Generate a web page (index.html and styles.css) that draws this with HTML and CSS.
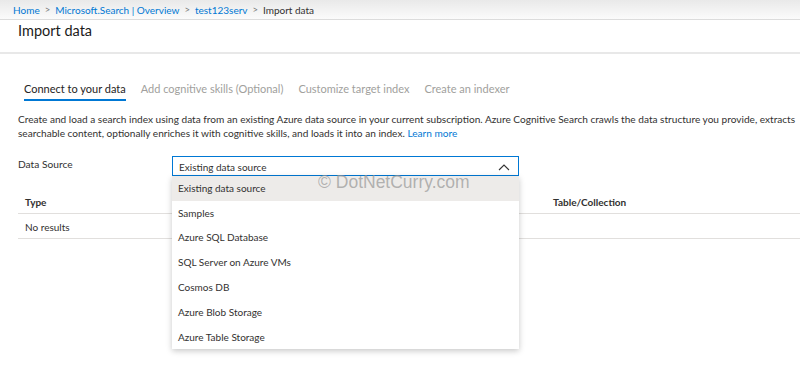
FILE: index.html
```html
<!DOCTYPE html>
<html>
<head>
<meta charset="utf-8">
<link rel="stylesheet" href="styles.css">
</head>
<body>
<div class="topbar">
  <nav class="crumbs">
    <a class="crumb">Home</a><span class="sep">&gt;</span>
    <a class="crumb">Microsoft.Search | Overview</a><span class="sep">&gt;</span>
    <a class="crumb">test123serv</a><span class="sep">&gt;</span>
    <span class="crumb-current">Import data</span>
  </nav>
</div>
<header class="page-head">
  <h1 class="title">Import data</h1>
</header>
<main class="content">
  <div class="tabs">
    <div class="tab active">Connect to your data</div>
    <div class="tab">Add cognitive skills (Optional)</div>
    <div class="tab">Customize target index</div>
    <div class="tab">Create an indexer</div>
  </div>
  <p class="intro">Create and load a search index using data from an existing Azure data source in your current subscription. Azure Cognitive Search crawls the data structure you provide, extracts searchable content, optionally enriches it with cognitive skills, and loads it into an index. <a class="link">Learn more</a></p>
  <div class="field">
    <label class="field-label">Data Source</label>
    <div class="select-wrap">
      <div class="select">
        <span>Existing data source</span>
        <svg class="chev" width="12" height="8" viewBox="0 0 12 8"><path d="M1 7 L6 2 L11 7" fill="none" stroke="#333" stroke-width="1.1"/></svg>
      </div>
      <ul class="menu">
        <li class="opt selected">Existing data source</li>
        <li class="opt">Samples</li>
        <li class="opt">Azure SQL Database</li>
        <li class="opt">SQL Server on Azure VMs</li>
        <li class="opt">Cosmos DB</li>
        <li class="opt">Azure Blob Storage</li>
        <li class="opt">Azure Table Storage</li>
      </ul>
      <div class="watermark">© DotNetCurry.com</div>
    </div>
  </div>
  <div class="table">
    <div class="row head">
      <div class="c1">Type</div>
      <div class="c2">Table/Collection</div>
    </div>
    <div class="row">
      <div class="c1">No results</div>
    </div>
  </div>
</main>
</body>
</html>
```
FILE: styles.css
```css
* { box-sizing: border-box; }
html, body { margin: 0; padding: 0; background: #fff; }
body {
  font-family: Lato, "Open Sans", sans-serif;
  color: #323130;
  font-size: 10px;
  width: 800px;
  height: 366px;
  overflow: hidden;
}
.topbar {
  height: 20px;
  background: linear-gradient(#e9e9e9, #fbfbfb);
  border-bottom: 1px solid #dcdcdc;
  padding-left: 13px;
  display: flex;
  align-items: center;
}
.crumbs { display: flex; align-items: center; font-size: 10px; white-space: nowrap; }
.crumb { color: #0078d4; }
.sep { color: #777; margin: 0 5px; font-size: 9.5px; }
.crumb-current { color: #323130; }
.page-head {
  height: 34px;
  border-bottom: 2px solid #e8e8e8;
  padding-left: 18px;
}
.title { margin: 0; font-size: 14.5px; font-weight: 400; line-height: 22px; color: #1b1b1b; }
.content { padding: 0 0 0 18px; }
.tabs { display: flex; margin-top: 27px; padding-left: 6px; gap: 15px; }
.tab { font-size: 11px; color: #a19f9d; padding-bottom: 3px; border-bottom: 2px solid transparent; line-height: 15px; }
.tab.active { color: #252423; border-bottom-color: #0078d4; }
.intro { margin: 11px 0 0; line-height: 14px; font-size: 10.1px; width: 782px; }
.link { color: #0078d4; }
.field { display: flex; margin-top: 16px; }
.field-label { width: 154px; font-size: 10.2px; line-height: 17px; }
.select-wrap { position: relative; width: 347px; }
.select {
  height: 20px;
  border: 1px solid #0078d4;
  display: flex;
  align-items: center;
  justify-content: space-between;
  padding: 1px 8px 0 6px;
  font-size: 10px;
}
.chev { display: block; }
.menu {
  position: absolute;
  top: 20px; left: 0;
  width: 347px;
  margin: 0; padding: 0;
  list-style: none;
  background: #fff;
  box-shadow: 0 2px 6px rgba(0,0,0,0.22);
  z-index: 5;
}
.opt { height: 24.6px; line-height: 23.6px; padding: 1px 0 0 6px; font-size: 10px; }
.opt + .opt { height: 24.8px; }
.opt.selected { background: #edebe9; }
.watermark {
  position: absolute;
  left: 146px; top: 16px;
  font-family: "Liberation Sans", Arial, sans-serif;
  font-size: 17.5px;
  color: rgba(150,150,150,0.7);
  z-index: 6;
  white-space: nowrap;
}
.table { margin-top: 13px; }
.row { display: flex; height: 25px; align-items: center; border-bottom: 1px solid #e1dfdd; font-size: 10px; padding-top: 1px; }
.row .c1 { width: 535px; padding-left: 7px; }
.row.head { font-weight: 700; }
```
